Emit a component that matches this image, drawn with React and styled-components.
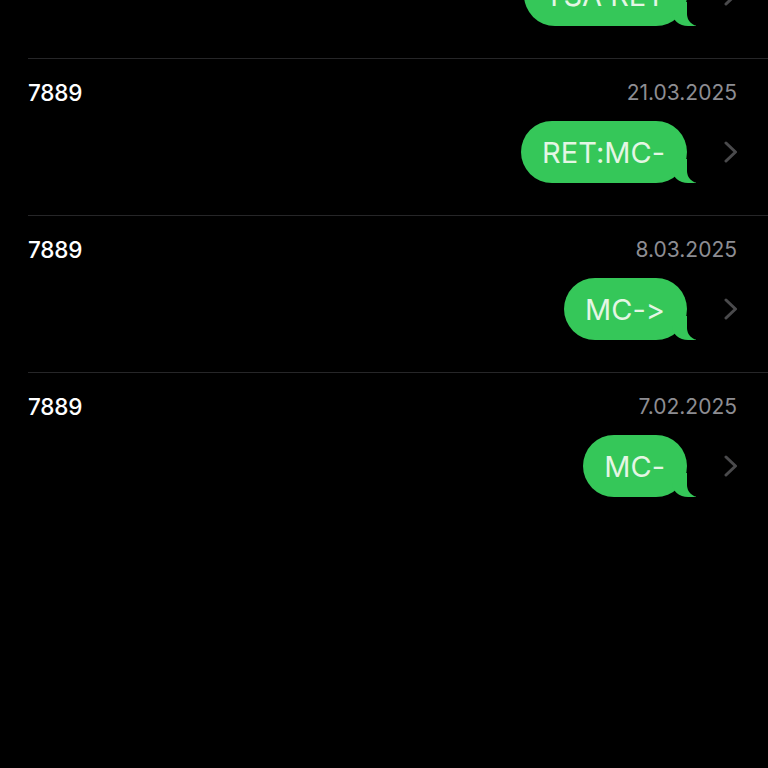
import React from 'react';
import styled, { createGlobalStyle } from 'styled-components';

const GlobalStyle = createGlobalStyle`
    html, body {
        margin: 0;
        padding: 0;
        background: #000;
        overflow: hidden;
    }
    body {
        font-family: Inter, "Noto Sans", "Liberation Sans", sans-serif;
        font-feature-settings: "calt" 0, "liga" 0;
        -webkit-font-smoothing: antialiased;
    }
`;

const GREEN = '#35c759';

const messages = [
    { sender: '7889', date: '28.03.2025', text: 'TSA RET' },
    { sender: '7889', date: '21.03.2025', text: 'RET:MC-' },
    { sender: '7889', date: '8.03.2025', text: 'MC->' },
    { sender: '7889', date: '7.02.2025', text: 'MC-' },
];

function Chevron() {
    return (
        <ChevronIcon viewBox="0 0 14 22" width="14" height="22">
            <polyline
                points="2,2 11.5,11 2,20"
                fill="none"
                stroke="#4a4a4c"
                strokeWidth="3"
                strokeLinecap="round"
                strokeLinejoin="round"
            />
        </ChevronIcon>
    );
}

export default function App() {
    return (
        <>
            <GlobalStyle />
            <Page>
                <List>
                    {messages.map((msg, index) => (
                        <Row key={index}>
                            <Header>
                                <Sender>{msg.sender}</Sender>
                                <DateText>{msg.date}</DateText>
                            </Header>
                            <BubbleLine>
                                <Bubble>{msg.text}</Bubble>
                                <Chevron />
                            </BubbleLine>
                        </Row>
                    ))}
                </List>
            </Page>
        </>
    );
}

// styles

const Page = styled.div`
    width: 768px;
    height: 768px;
    background: #000;
    overflow: hidden;
`;

const List = styled.ul`
    list-style: none;
    margin: -98px 0 0;
    padding: 0 0 0 28px;
`;

const Row = styled.li`
    display: flex;
    flex-direction: column;
    padding: 19px 30px 32px 0;
    border-bottom: 1px solid #262628;

    &:last-child {
        border-bottom: none;
    }
`;

const Header = styled.div`
    display: flex;
    align-items: center;
    justify-content: space-between;
    height: 28px;
`;

const Sender = styled.span`
    color: #fff;
    font-size: 22.5px;
    font-weight: 500;
    letter-spacing: -0.2px;
`;

const DateText = styled.span`
    color: #8d8d92;
    font-size: 21px;
    font-weight: 400;
    margin-right: 1px;
`;

const BubbleLine = styled.div`
    display: flex;
    align-items: center;
    justify-content: flex-end;
    gap: 28px;
    margin-top: 15px;
`;

const Bubble = styled.div`
    position: relative;
    height: 62px;
    display: flex;
    align-items: center;
    padding: 0 22px 0 21px;
    border-radius: 31px;
    background: ${GREEN};
    color: #e4f6e4;
    font-size: 29px;
    font-weight: 400;
    margin-right: 9px;

    &::before {
        content: '';
        position: absolute;
        z-index: 0;
        bottom: 0;
        right: -9px;
        width: 24px;
        height: 24px;
        background: ${GREEN};
        border-bottom-left-radius: 16px 14px;
    }

    &::after {
        content: '';
        position: absolute;
        z-index: 1;
        bottom: 0;
        right: -15px;
        width: 15px;
        height: 24px;
        background: #000;
        border-bottom-left-radius: 12px;
    }
`;

const ChevronIcon = styled.svg`
    flex-shrink: 0;
    display: block;
`;
